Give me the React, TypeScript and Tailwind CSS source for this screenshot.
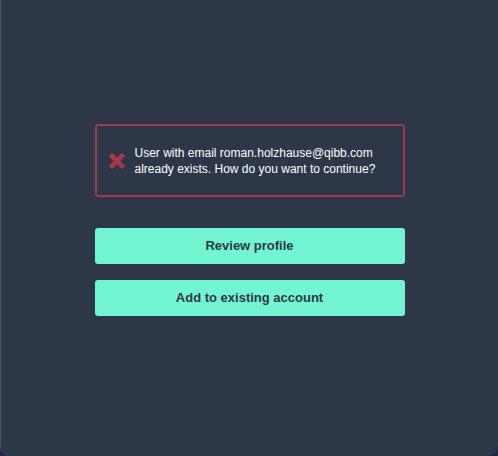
export default function App() {
  return (
    <div className="h-[456px] w-[498px] bg-[#23264a]">
      <div className="flex h-full w-full flex-col items-center rounded-b-[10px] border-l border-l-[#4a5263] bg-[#2d3748] pt-[124px] font-['Liberation_Sans',Arial,sans-serif]">
        <div className="flex h-[73px] w-[310px] items-center gap-[9px] rounded-[3px] border-2 border-[#9c3b4b] pl-[11px]">
          <svg width="18" height="18" viewBox="0 0 18 18" className="shrink-0">
            <path d="M2.5 2.5 L15.5 15.5 M15.5 2.5 L2.5 15.5" stroke="#a33a4a" strokeWidth="5" strokeLinecap="butt" />
          </svg>
          <p className="text-[12px] leading-[16px] text-white">
            User with email roman.holzhause@qibb.com
            <br />
            already exists. How do you want to continue?
          </p>
        </div>
        <button className="mt-[31px] h-[36px] w-[310px] rounded-[3px] bg-[#72f6d1] text-[13px] font-bold text-[#2d3748]">
          Review profile
        </button>
        <button className="mt-[16px] h-[36px] w-[310px] rounded-[3px] bg-[#72f6d1] text-[13px] font-bold text-[#2d3748]">
          Add to existing account
        </button>
      </div>
    </div>
  );
}
